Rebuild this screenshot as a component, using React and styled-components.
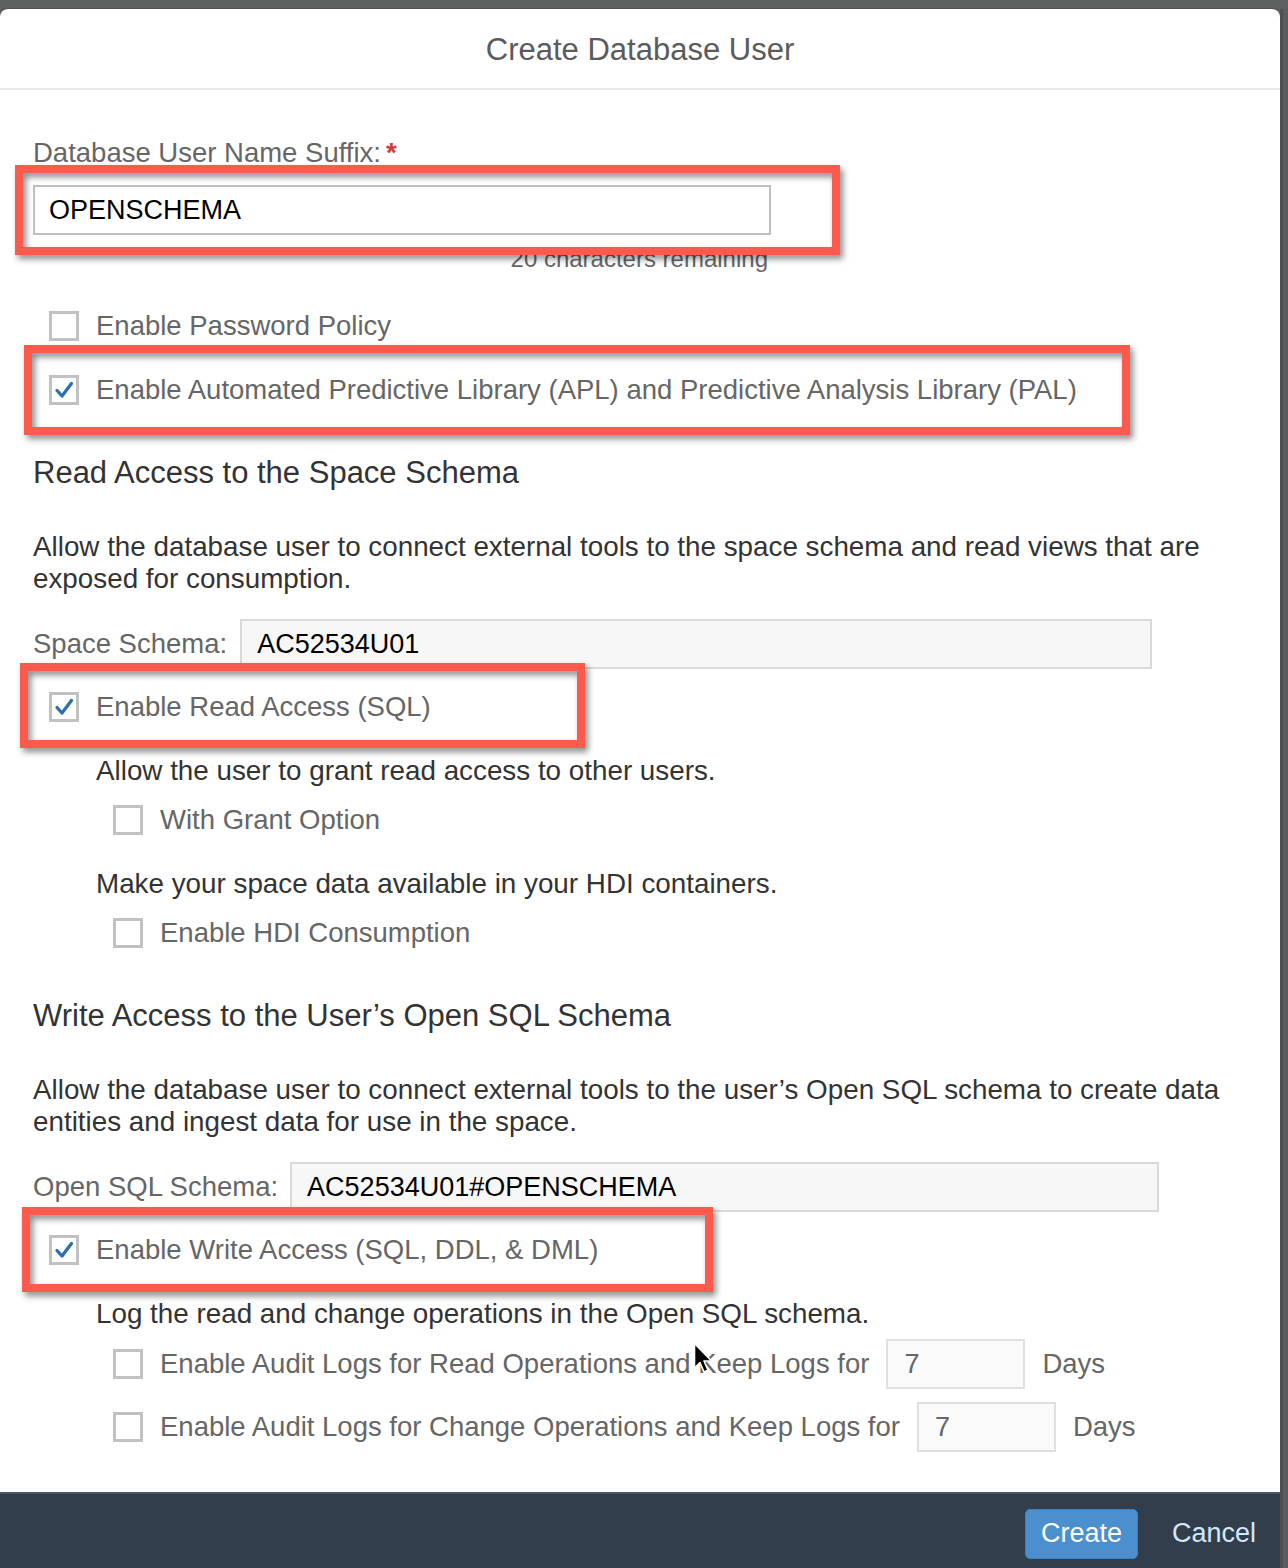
import React from 'react';
import styled, { createGlobalStyle } from 'styled-components';

const Global = createGlobalStyle`
  html, body { margin: 0; padding: 0; background: #5d6061; }
  body { font-family: "Liberation Sans", Arial, sans-serif; }
  * { box-sizing: border-box; }
`;

const Page = styled.div`
  display: flex;
  height: 1568px;
  padding-top: 9px;
  background: #5d6061;
  overflow: hidden;
`;

const Dialog = styled.div`
  width: 1280px;
  flex: none;
  display: flex;
  flex-direction: column;
  background: #fff;
  border-radius: 8px 8px 0 0;
  box-shadow: 0 -1px 0 #4a4c4d;
  overflow: hidden;
`;

const Backdrop = styled.div`
  flex: 1;
  background: #5a5c5d;
  border-left: 3px solid #4d4f50;
`;

const Header = styled.header`
  height: 81px;
  padding-top: 3px;
  display: flex;
  align-items: center;
  justify-content: center;
  border-bottom: 2px solid #e8e8e8;
`;

const Title = styled.h1`
  margin: 0;
  font-size: 31px;
  font-weight: normal;
  color: #5b5b5b;
`;

const Content = styled.main`
  flex: 1;
  position: relative;
  padding: 47px 33px 0;
  display: flex;
  flex-direction: column;
  align-items: flex-start;
`;

const FieldLabel = styled.div`
  font-size: 27.5px;
  line-height: 32px;
  color: #666;
`;

const Required = styled.span`
  color: #d23a3a;
  font-weight: bold;
  margin-left: 5px;
`;

const InputWrap = styled.div`
  position: relative;
  width: ${p => p.$w}px;
  margin-top: ${p => p.$mt || 0}px;
`;

const Field = styled.div`
  width: ${p => (p.$w ? `${p.$w}px` : '100%')};
  height: 50px;
  flex: none;
  display: flex;
  align-items: center;
  padding: 0 ${p => p.$pad || 14}px;
  border: 2px solid ${p => p.$border || '#bfbfbf'};
  background: ${p => p.$bg || '#fff'};
  font-size: 27px;
  color: ${p => p.$color || '#000'};
`;

const Hint = styled.div`
  width: 738px;
  margin-top: ${p => p.$mt}px;
  padding-right: 3px;
  text-align: right;
  font-size: 24px;
  line-height: 32px;
  color: #666;
`;

const Frame = styled.div`
  position: absolute;
  left: ${p => p.$l}px;
  top: ${p => p.$t}px;
  width: ${p => p.$w}px;
  height: ${p => p.$h}px;
  border: 8px solid #fd5a4e;
  filter: drop-shadow(3px 4px 3px rgba(0, 0, 0, 0.45));
  pointer-events: none;
  z-index: 2;
`;

const CheckRow = styled.div`
  position: relative;
  display: flex;
  align-items: center;
  gap: 17px;
  min-height: 48px;
  margin-top: ${p => p.$mt || 0}px;
  padding-left: ${p => p.$indent}px;
  font-size: 27.5px;
  color: #666;
  white-space: nowrap;
`;

const Box = styled.span`
  width: 30px;
  height: 30px;
  flex: none;
  display: flex;
  align-items: center;
  justify-content: center;
  border: 3px solid #c2c2c2;
  background: #fff;
`;

const Heading = styled.h2`
  margin: ${p => p.$mt}px 0 0;
  font-size: 31px;
  line-height: 40px;
  font-weight: normal;
  color: #333;
`;

const Para = styled.p`
  margin: ${p => p.$mt}px 0 0;
  padding-left: ${p => p.$indent || 0}px;
  font-size: 27.8px;
  line-height: 32px;
  color: #333;
`;

const SchemaRow = styled.div`
  display: flex;
  align-items: center;
  gap: ${p => p.$gap}px;
  margin-top: ${p => p.$mt}px;
`;

const Cursor = styled.svg`
  position: absolute;
  left: 693px;
  top: 1252px;
  z-index: 3;
`;

const Footer = styled.footer`
  height: 76px;
  flex: none;
  display: flex;
  align-items: center;
  justify-content: flex-end;
  gap: 19px;
  padding: 5px 9px 0 0;
  background: #323e4b;
  border-top: 2px solid #46576a;
`;

const CreateButton = styled.button`
  height: 50px;
  padding: 0 15px;
  background: #4b8fce;
  border: 1px solid #3f80bf;
  border-radius: 5px;
  color: #fff;
  font-family: inherit;
  font-size: 27px;
`;

const CancelButton = styled.button`
  height: 50px;
  padding: 0 15px;
  background: transparent;
  border: none;
  color: #d3e8fd;
  font-family: inherit;
  font-size: 27px;
`;

const Check = ({ checked }) => (
  <Box>
    {checked && (
      <svg width="24" height="24" viewBox="0 0 24 24">
        <path d="M5 12.5 L10 18 L19.5 5.5" fill="none" stroke="#2e6fae" strokeWidth="3.3" strokeLinecap="round" strokeLinejoin="round" />
      </svg>
    )}
  </Box>
);

const DaysField = ({ w }) => (
  <Field $w={w} $bg="#fafafa" $border="#e0e0e0" $color="#666" $pad={16}>7</Field>
);

export default function App() {
  return (
    <>
      <Global />
      <Page>
        <Dialog>
          <Header>
            <Title>Create Database User</Title>
          </Header>
          <Content>
            <FieldLabel>
              Database User Name Suffix:<Required>*</Required>
            </FieldLabel>
            <InputWrap $w={738} $mt={16}>
              <Field $pad={14}>OPENSCHEMA</Field>
              <Frame $l={-18} $t={-20} $w={825} $h={90} />
            </InputWrap>
            <Hint $mt={8}>20 characters remaining</Hint>

            <CheckRow $mt={27} $indent={16}>
              <Check />
              Enable Password Policy
            </CheckRow>
            <CheckRow $mt={16} $indent={16}>
              <Check checked />
              Enable Automated Predictive Library (APL) and Predictive Analysis Library (PAL)
              <Frame $l={-9} $t={-21} $w={1106} $h={90} />
            </CheckRow>

            <Heading $mt={39}>Read Access to the Space Schema</Heading>
            <Para $mt={38}>
              Allow the database user to connect external tools to the space schema and read views that are exposed for consumption.
            </Para>
            <SchemaRow $mt={24} $gap={13}>
              <FieldLabel>Space Schema:</FieldLabel>
              <Field $w={912} $bg="#f7f7f7" $border="#d9d9d9" $pad={15}>AC52534U01</Field>
            </SchemaRow>
            <CheckRow $mt={14} $indent={16}>
              <Check checked />
              Enable Read Access (SQL)
              <Frame $l={-13} $t={-20} $w={565} $h={85} />
            </CheckRow>
            <Para $mt={24} $indent={63}>Allow the user to grant read access to other users.</Para>
            <CheckRow $mt={9} $indent={80}>
              <Check />
              With Grant Option
            </CheckRow>
            <Para $mt={24} $indent={63}>Make your space data available in your HDI containers.</Para>
            <CheckRow $mt={9} $indent={80}>
              <Check />
              Enable HDI Consumption
            </CheckRow>

            <Heading $mt={39}>Write Access to the User’s Open SQL Schema</Heading>
            <Para $mt={38}>
              Allow the database user to connect external tools to the user’s Open SQL schema to create data entities and ingest data for use in the space.
            </Para>
            <SchemaRow $mt={24} $gap={12}>
              <FieldLabel>Open SQL Schema:</FieldLabel>
              <Field $w={869} $bg="#f7f7f7" $border="#d9d9d9" $pad={15}>AC52534U01#OPENSCHEMA</Field>
            </SchemaRow>
            <CheckRow $mt={14} $indent={16}>
              <Check checked />
              Enable Write Access (SQL, DDL, &amp; DML)
              <Frame $l={-11} $t={-19} $w={691} $h={85} />
            </CheckRow>
            <Para $mt={24} $indent={63}>Log the read and change operations in the Open SQL schema.</Para>
            <CheckRow $mt={9} $indent={80}>
              <Check />
              Enable Audit Logs for Read Operations and Keep Logs for
              <DaysField w={139} />
              Days
            </CheckRow>
            <CheckRow $mt={13} $indent={80}>
              <Check />
              Enable Audit Logs for Change Operations and Keep Logs for
              <DaysField w={139} />
              Days
            </CheckRow>

            <Cursor width="22" height="34" viewBox="0 0 22 34">
              <path d="M1.5 1.5 L1.5 26 L7 20.5 L11 30 L15 28.3 L11 19 L18.5 19 Z" fill="#000" stroke="#fff" strokeWidth="1.6" strokeLinejoin="round" />
            </Cursor>
          </Content>
          <Footer>
            <CreateButton>Create</CreateButton>
            <CancelButton>Cancel</CancelButton>
          </Footer>
        </Dialog>
        <Backdrop />
      </Page>
    </>
  );
}
